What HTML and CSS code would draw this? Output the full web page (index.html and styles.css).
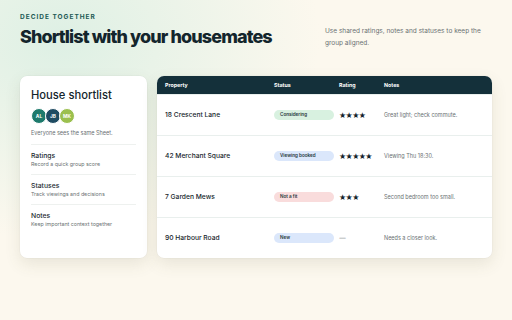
FILE: index.html
```html
<!DOCTYPE html>
<html>
<head>
<meta charset="utf-8">
<link rel="stylesheet" href="styles.css">
</head>
<body>
<div class="page">
  <header class="top">
    <div class="intro">
      <div class="eyebrow">DECIDE TOGETHER</div>
      <h1 class="title">Shortlist with your housemates</h1>
    </div>
    <p class="lede">Use shared ratings, notes and statuses to keep the group aligned.</p>
  </header>
  <main class="content">
    <aside class="side">
      <h2 class="side-title">House shortlist</h2>
      <div class="avatars">
        <span class="av av-al">AL</span>
        <span class="av av-jb">JB</span>
        <span class="av av-mk">MK</span>
      </div>
      <p class="side-note">Everyone sees the same Sheet.</p>
      <div class="feat">
        <div class="feat-name">Ratings</div>
        <div class="feat-desc">Record a quick group score</div>
      </div>
      <div class="feat">
        <div class="feat-name">Statuses</div>
        <div class="feat-desc">Track viewings and decisions</div>
      </div>
      <div class="feat">
        <div class="feat-name">Notes</div>
        <div class="feat-desc">Keep important context together</div>
      </div>
    </aside>
    <section class="table">
      <div class="row head">
        <span>Property</span><span>Status</span><span>Rating</span><span>Notes</span>
      </div>
      <div class="row">
        <span class="prop">18 Crescent Lane</span>
        <span><span class="badge b-green">Considering</span></span>
        <span class="stars">★★★★</span>
        <span class="note">Great light; check commute.</span>
      </div>
      <div class="row">
        <span class="prop">42 Merchant Square</span>
        <span><span class="badge b-blue">Viewing booked</span></span>
        <span class="stars">★★★★★</span>
        <span class="note">Viewing Thu 18:30.</span>
      </div>
      <div class="row">
        <span class="prop">7 Garden Mews</span>
        <span><span class="badge b-red">Not a fit</span></span>
        <span class="stars">★★★</span>
        <span class="note">Second bedroom too small.</span>
      </div>
      <div class="row">
        <span class="prop">90 Harbour Road</span>
        <span><span class="badge b-blue">New</span></span>
        <span class="stars dash">—</span>
        <span class="note">Needs a closer look.</span>
      </div>
    </section>
  </main>
</div>
</body>
</html>
```
FILE: styles.css
```css
* { box-sizing: border-box; margin: 0; padding: 0; }
html, body { width: 512px; height: 320px; overflow: hidden; }
body {
  font-family: Inter, "Noto Sans", sans-serif;
  background:
    radial-gradient(ellipse 260px 200px at 60px 40px, rgba(214, 238, 226, 0.8), rgba(214, 238, 226, 0) 100%),
    #fcf8ee;
  color: #16262c;
}
.page { padding: 13px 20px 0 20px; }
.top { display: flex; justify-content: space-between; align-items: flex-start; }
.intro { flex-shrink: 0; white-space: nowrap; }
.eyebrow {
  font-size: 6.5px; font-weight: 700; letter-spacing: 1px; color: #1d5a55;
  line-height: 8px;
}
.title {
  margin-top: 4px;
  font-size: 18px; font-weight: 800; letter-spacing: -0.9px; line-height: 23px;
  color: #13252c;
}
.lede {
  width: 167px; flex-shrink: 0; margin-top: 12px;
  font-size: 6.5px; line-height: 12px; color: #6a7173;
}
.content { display: flex; gap: 10px; margin-top: 27px; align-items: stretch; }
.side {
  width: 127px; height: 182px; background: #fff; border-radius: 7px;
  padding: 11px 11px;
  box-shadow: 0 6px 16px rgba(90, 90, 60, 0.12), 0 0 0 0.5px rgba(0,0,0,0.04);
}
.side-title { font-size: 11.2px; font-weight: 500; line-height: 16px; color: #13252c; }
.avatars { display: flex; margin-top: 5px; }
.av {
  width: 16px; height: 16px; border-radius: 50%; display: flex; align-items: center; justify-content: center;
  color: #fff; font-size: 4.8px; font-weight: 700; border: 1px solid #fff; margin-right: -2px;
}
.av-al { background: #1d7a6c; }
.av-jb { background: #1e4b62; }
.av-mk { background: #9bc04e; }
.side-note { font-size: 5.5px; color: #6a7173; margin-top: 5px; line-height: 8px; padding-bottom: 7px; }
.feat { border-top: 1px solid #eef1ef; padding: 6px 0 6px; }
.feat-name { font-size: 6.8px; font-weight: 500; color: #1c2a30; line-height: 9px; }
.feat-desc { font-size: 5.3px; color: #6a7173; line-height: 8px; }
.table {
  flex: 1; height: 182px; background: #fff; border-radius: 7px; overflow: hidden;
  box-shadow: 0 6px 16px rgba(90, 90, 60, 0.12), 0 0 0 0.5px rgba(0,0,0,0.04);
  display: flex; flex-direction: column;
}
.row {
  display: grid; grid-template-columns: 109px 65px 45px 1fr; align-items: center;
  padding-left: 8px; height: 41px; border-top: 1px solid #e9efed;
}
.row.head {
  height: 18px; background: #14303a; color: #fff; border-top: none;
  font-size: 5.3px; font-weight: 700;
}
.prop { font-size: 6.7px; font-weight: 500; color: #16262c; }
.badge {
  display: block; width: 60px; height: 10px; border-radius: 5px; padding-left: 6px;
  font-size: 4.6px; font-weight: 600; line-height: 10px; color: #26373c;
}
.b-green { background: #d8f1e0; }
.b-blue { background: #dbe7fb; }
.b-red { background: #f9dcdc; }
.stars { font-size: 8px; color: #14252c; letter-spacing: -0.6px; font-family: "DejaVu Sans", sans-serif; }
.dash { color: #6a7173; font-size: 7px; }
.note { font-size: 5.5px; color: #6a7173; }
```
